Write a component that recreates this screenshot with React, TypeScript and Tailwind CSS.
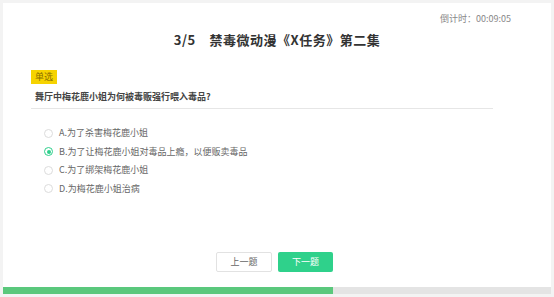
import React, { useState } from "react";

const options = [
  "A.为了杀害梅花鹿小姐",
  "B.为了让梅花鹿小姐对毒品上瘾，以便贩卖毒品",
  "C.为了绑架梅花鹿小姐",
  "D.为梅花鹿小姐治病",
];

const font = { fontFamily: '"Noto Sans CJK SC", "Liberation Sans", sans-serif' };

export default function App() {
  const [picked, setPicked] = useState(1);

  return (
    <div className="w-[554px] h-[297px] bg-[#f3f3f3] p-[3px]" style={font}>
      <div className="h-full bg-white flex flex-col">
        {/* 倒计时 */}
        <div className="flex justify-end pr-[40px] pt-[10px] h-[23px]">
          <span className="text-[9px] leading-[12px] text-[#888]">倒计时：00:09:05</span>
        </div>

        {/* 标题 */}
        <div className="flex justify-center h-[28px] items-center">
          <h1 className="text-[13px] font-bold text-[#333] tracking-[0.5px]">
            3/5&nbsp;&nbsp;&nbsp;&nbsp;禁毒微动漫《X任务》第二集
          </h1>
        </div>

        {/* 题目 */}
        <div className="pl-[28px] pr-[58px] pt-[7px]">
          <span className="inline-block bg-[#f6d300] text-[#8a6d00] text-[9px] leading-[14px] px-[4px]">
            单选
          </span>
          <div className="mt-[5px] pl-[4px] pb-[4px] border-b border-[#e6e6e6] text-[9px] leading-[14px] font-bold text-[#444]">
            舞厅中梅花鹿小姐为何被毒贩强行喂入毒品?
          </div>

          <div className="mt-[17px] pl-[13px] flex flex-col gap-[4px]">
            {options.map((o, i) => (
              <label
                key={o}
                onClick={() => setPicked(i)}
                className="flex items-center h-[14.5px] gap-[6px] cursor-pointer"
              >
                <span
                  className={`w-[9px] h-[9px] rounded-full border flex items-center justify-center ${
                    picked === i ? "border-[#2ecf8c]" : "border-[#dcdcdc]"
                  }`}
                >
                  {picked === i && <span className="w-[4px] h-[4px] rounded-full bg-[#2ecf8c]" />}
                </span>
                <span className="text-[9px] text-[#666] leading-[12px]">{o}</span>
              </label>
            ))}
          </div>
        </div>

        {/* 按钮 */}
        <div className="flex-1 flex items-end justify-center gap-[6px] pb-[15px] pr-[5px]">
          <button className="w-[56px] h-[20px] border border-[#e2e2e2] bg-white text-[9px] text-[#666] rounded-[2px]">
            上一题
          </button>
          <button className="w-[55px] h-[20px] bg-[#2fd18b] text-[9px] text-white rounded-[2px]">
            下一题
          </button>
        </div>

        {/* 进度 */}
        <div className="h-[7px] bg-[#e4e4e4] flex">
          <div className="h-full bg-[#5ac87c]" style={{ width: `${(330 / 548) * 100}%` }} />
        </div>
      </div>
    </div>
  );
}
